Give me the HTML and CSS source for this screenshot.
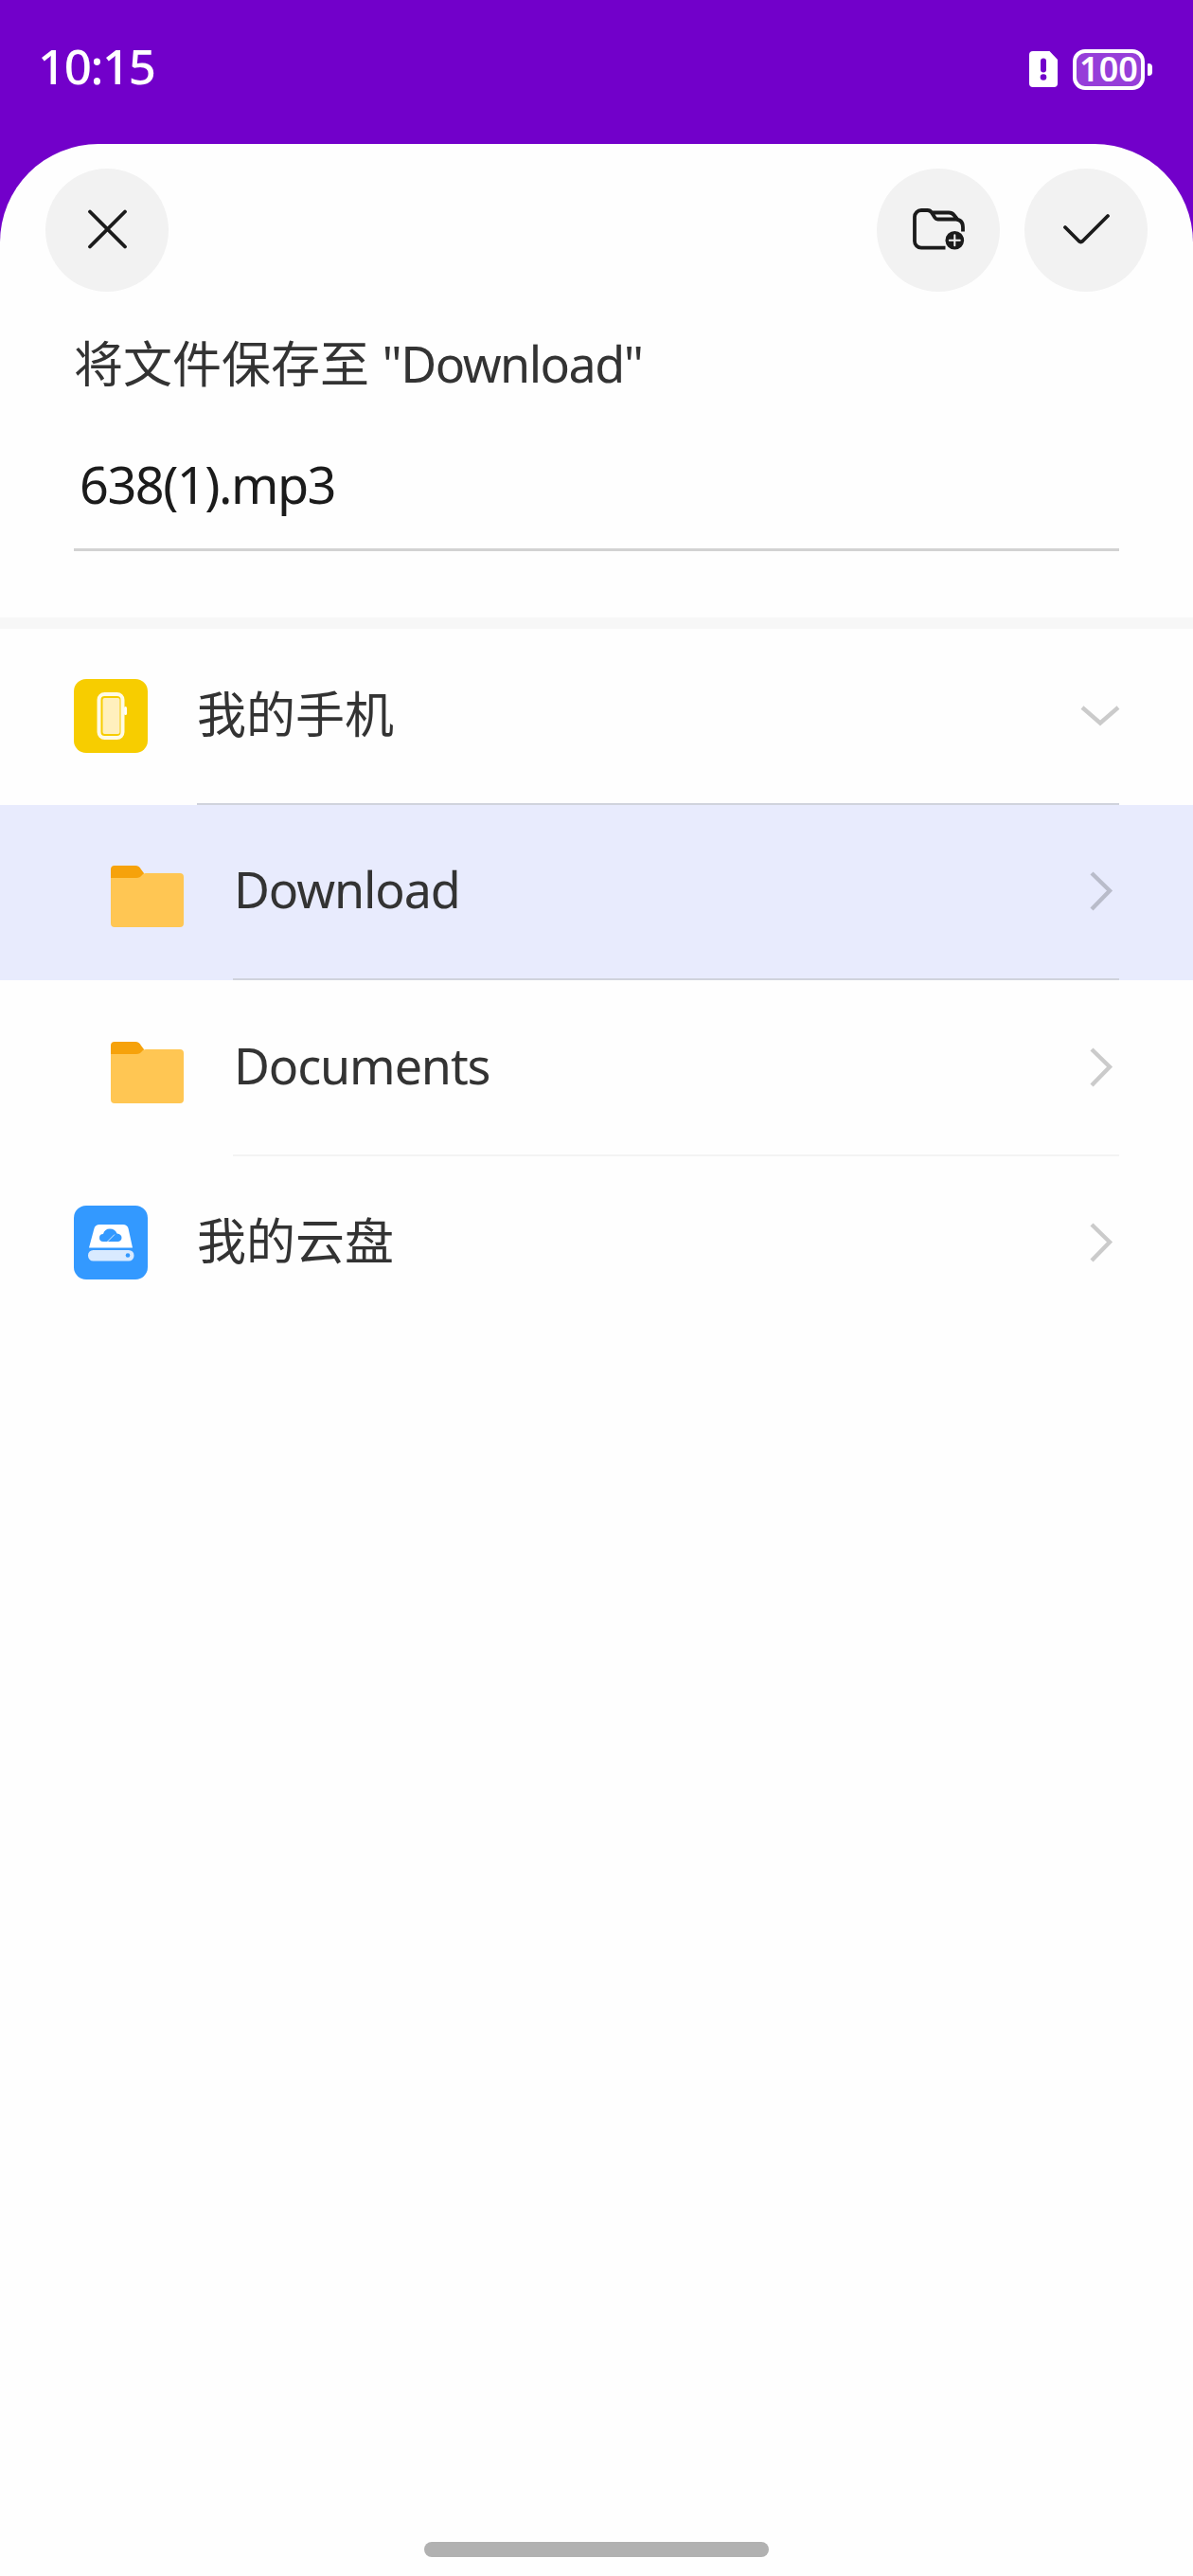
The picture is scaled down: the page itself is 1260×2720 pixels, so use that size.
FILE: index.html
```html
<!DOCTYPE html>
<html lang="zh-CN">
<head>
<meta charset="utf-8">
<title>保存文件</title>
<link rel="stylesheet" href="styles.css">
</head>
<body>
<div class="screen">
  <header class="status">
    <span class="time">10:15</span>
    <div class="indicators">
      <svg class="sim" viewBox="0 0 30 38"><path fill="#fff" fill-rule="evenodd" d="M4 0H21.500L30 9V34a4 4 0 0 1-4 4H4a4 4 0 0 1-4-4V4a4 4 0 0 1 4-4Z"/><path d="M15 10.500v9" stroke="#7200ca" stroke-width="6" stroke-linecap="round"/><circle cx="15" cy="27.500" r="3.300" fill="#7200ca"/></svg>
      <span class="battery">100</span>
      <span class="battery-tip"></span>
    </div>
  </header>
  <main class="sheet">
    <div class="toolbar">
      <button class="round close" aria-label="关闭"><svg viewBox="0 0 130 130"><path d="M47 45.500 84 82.500M84 45.500 47 82.500"/></svg></button>
      <button class="round" aria-label="新建文件夹"><svg viewBox="0 0 130 130"><path stroke-linecap="butt" d="M72.500 83.700H47a7 7 0 0 1-7-7V51a7 7 0 0 1 7-7H53.500q3 0 4.500 2.500L61.500 52q1 1.500 3 1.500H84q7 1 7 8.500V66.500M57 46.500H76q3.500 0 5.500 2.500L85.500 54"/><circle cx="82.300" cy="75.700" r="9.800" fill="#1b1b1b" stroke="none"/><path class="plus" d="M76.800 75.700h11M82.300 70.200v11"/></svg></button>
      <button class="round" aria-label="确定"><svg viewBox="0 0 130 130"><path d="M43 62 57.500 76.500a3 3 0 0 0 4 0L88 50"/></svg></button>
    </div>
    <h1 class="title">将文件保存至 <span class="latin">"Download"</span></h1>
    <div class="filename">638(1).mp3</div>
    <ul class="list">
      <li class="row">
        <svg class="tile" viewBox="0 0 78 78"><rect width="78" height="78" rx="13" fill="#f7cd00"/><rect x="53" y="29" width="3" height="9" rx="1.500" fill="#fff"/><rect x="26.500" y="16" width="25" height="46" rx="6" fill="#f7cd00" stroke="#fffbe5" stroke-width="4"/><rect x="30.500" y="20" width="18" height="38" rx="2" fill="#fff0bd"/></svg>
        <div class="cell line-dark"><span class="label">我的手机</span><svg class="arrow" viewBox="0 0 44 44"><path d="M3 13 22 29.500 41 13"/></svg></div>
      </li>
      <li class="row nested selected">
        <svg class="folder" viewBox="0 0 78 78"><path fill="#f6a20b" d="M1 16V9a4 4 0 0 1 4-4H27q4 0 6 4l3 4v5H1Z"/><path fill="#ffc653" d="M1 18H28q4 0 6-3 1-2 4-2H74a4 4 0 0 1 4 4V66a4 4 0 0 1-4 4H5a4 4 0 0 1-4-4Z"/></svg>
        <div class="cell line-dark"><span class="label">Download</span><svg class="arrow" viewBox="0 0 44 44"><path d="M13 3 32 21.500 13 41"/></svg></div>
      </li>
      <li class="row nested">
        <svg class="folder" viewBox="0 0 78 78"><path fill="#f6a20b" d="M1 16V9a4 4 0 0 1 4-4H27q4 0 6 4l3 4v5H1Z"/><path fill="#ffc653" d="M1 18H28q4 0 6-3 1-2 4-2H74a4 4 0 0 1 4 4V66a4 4 0 0 1-4 4H5a4 4 0 0 1-4-4Z"/></svg>
        <div class="cell line-light"><span class="label">Documents</span><svg class="arrow" viewBox="0 0 44 44"><path d="M13 3 32 21.500 13 41"/></svg></div>
      </li>
      <li class="row">
        <svg class="tile" viewBox="0 0 78 78"><rect width="78" height="78" rx="13" fill="#3399ff"/><path fill="#fff" d="M27 20H52q4 0 5.500 4L62 44.500H16L21.500 24Q23 20 27 20Z"/><rect x="15" y="47" width="48.500" height="11.500" rx="5.500" fill="#d9eaff"/><circle cx="57" cy="52.500" r="2.300" fill="#3399ff"/><path fill="#3399ff" d="M31 38a4 4 0 0 1 0-8q1.500-5.500 7-5.500t7.500 5q5 .5 5 4.500a4 4 0 0 1-4.500 4Z"/><path d="M35 38.500 43 30.500" stroke="#fff" stroke-opacity=".8" stroke-width="1"/></svg>
        <div class="cell"><span class="label">我的云盘</span><svg class="arrow" viewBox="0 0 44 44"><path d="M13 3 32 21.500 13 41"/></svg></div>
      </li>
    </ul>
    <div class="home-bar"></div>
  </main>
</div>
</body>
</html>
```
FILE: styles.css
```css
* { box-sizing: border-box; }
body {
  margin: 0;
  background: #7200ca;
  color: #333;
  font-family: "Noto Sans", "Noto Sans CJK SC", sans-serif;
}
.screen {
  width: 1260px;
  height: 2720px;
  display: flex;
  flex-direction: column;
  overflow: hidden;
}
.status {
  height: 152px;
  flex: none;
  display: flex;
  justify-content: space-between;
  align-items: flex-start;
  padding: 50px 43px 0 40px;
  color: #fff;
}
.time {
  font-size: 51px;
  font-weight: 500;
  line-height: 39px;
  letter-spacing: -1.4px;
}
.indicators { display: flex; align-items: center; height: 46px; }
.sim { width: 30px; height: 38px; margin-right: 16px; }
.battery {
  width: 76px;
  height: 43px;
  border: 4px solid #fff;
  border-radius: 13px;
  background: #963ed9;
  font-size: 36px;
  font-weight: 600;
  line-height: 34px;
  text-align: center;
}
.battery-tip {
  width: 5px;
  height: 13px;
  margin-left: 3px;
  border-radius: 1px 4px 4px 1px;
  background: #fff;
}
.sheet {
  flex: 1;
  display: flex;
  flex-direction: column;
  background: #fefefe;
  border-radius: 104px 104px 0 0;
}
.toolbar {
  display: flex;
  gap: 26px;
  padding: 26px 48px 0;
}
.round {
  width: 130px;
  height: 130px;
  padding: 0;
  border: 0;
  border-radius: 50%;
  background: #f2f2f2;
}
.round svg {
  display: block;
  width: 130px;
  height: 130px;
  fill: none;
  stroke: #1b1b1b;
  stroke-width: 3.8;
  stroke-linecap: round;
  stroke-linejoin: round;
}
.round .plus { stroke: #f2f2f2; stroke-width: 2; }
.close { margin-right: auto; }
.title {
  margin: 41px 78px 0;
  font-size: 52px;
  font-weight: 400;
  line-height: 70px;
}
.latin { letter-spacing: -1.5px; }
.filename {
  height: 131px;
  margin: 32px 78px 70px;
  padding-left: 6px;
  border-bottom: 3px solid #d2d2d2;
  color: #1b1b1b;
  font-size: 54px;
  line-height: 121px;
  letter-spacing: -1.5px;
}
.list {
  margin: 0;
  padding: 0;
  list-style: none;
  border-top: 12px solid #f7f7f7;
}
.row {
  height: 185.5px;
  display: flex;
  align-items: center;
  gap: 52px;
  padding: 0 78px;
}
.nested { padding-left: 117px; }
.selected { background: #e8ebfd; }
.tile, .folder { width: 78px; height: 78px; flex: none; }
.tile { margin-top: -2px; }
.folder { margin: 12px 0 0 -1px; }
.cell {
  flex: 1;
  height: 100%;
  display: flex;
  align-items: center;
  justify-content: space-between;
  border-bottom: 2px solid transparent;
}
.line-dark { border-color: #d0d3dc; }
.line-light { border-color: #f3f3f3; }
.label {
  padding-bottom: 4px;
  font-size: 52px;
  line-height: 70px;
}
.nested .label { padding-left: 1px; letter-spacing: -1.1px; }
.arrow {
  width: 44px;
  height: 44px;
  margin-right: -2px;
  fill: none;
  stroke: #000;
  stroke-opacity: 0.2;
  stroke-width: 4.4;
}
.home-bar {
  width: 364px;
  height: 16px;
  margin: auto auto 20px;
  border-radius: 8px;
  background: #b1b1b1;
}
```
